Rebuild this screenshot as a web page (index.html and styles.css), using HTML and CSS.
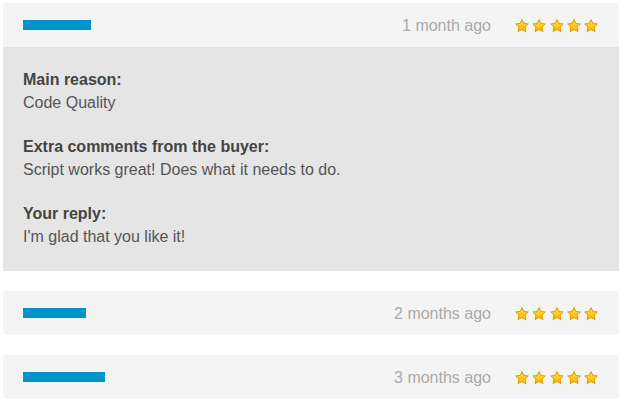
FILE: index.html
```html
<!DOCTYPE html>
<html>
<head>
<meta charset="utf-8">
<link rel="stylesheet" href="styles.css">
</head>
<body>
<svg width="0" height="0" class="defs">
  <defs>
    <linearGradient id="sg" x1="0" y1="0" x2="0" y2="1">
      <stop offset="0" stop-color="#ffdf3a"/>
      <stop offset="1" stop-color="#f9b800"/>
    </linearGradient>
    <symbol id="star" viewBox="0 0 14 14">
      <path d="M7 0.6 L8.9 4.5 L13.3 5 L10 8 L10.9 12.6 L7 10.4 L3.1 12.6 L4 8 L0.7 5 L5.1 4.5 Z" fill="url(#sg)" stroke="#dc9a00" stroke-width="1" stroke-linejoin="round"/>
    </symbol>
  </defs>
</svg>
<div class="list">
  <div class="review">
    <div class="head">
      <span class="name" style="width:68px"></span>
      <span class="when">1 month ago</span>
      <span class="stars">
        <svg class="star"><use href="#star"/></svg><svg class="star"><use href="#star"/></svg><svg class="star"><use href="#star"/></svg><svg class="star"><use href="#star"/></svg><svg class="star"><use href="#star"/></svg>
      </span>
    </div>
    <div class="body">
      <p><b>Main reason:</b><br>Code Quality</p>
      <p><b>Extra comments from the buyer:</b><br>Script works great! Does what it needs to do.</p>
      <p><b>Your reply:</b><br>I'm glad that you like it!</p>
    </div>
  </div>
  <div class="review">
    <div class="head solo">
      <span class="name" style="width:63px"></span>
      <span class="when">2 months ago</span>
      <span class="stars">
        <svg class="star"><use href="#star"/></svg><svg class="star"><use href="#star"/></svg><svg class="star"><use href="#star"/></svg><svg class="star"><use href="#star"/></svg><svg class="star"><use href="#star"/></svg>
      </span>
    </div>
  </div>
  <div class="review">
    <div class="head solo">
      <span class="name" style="width:82px"></span>
      <span class="when">3 months ago</span>
      <span class="stars">
        <svg class="star"><use href="#star"/></svg><svg class="star"><use href="#star"/></svg><svg class="star"><use href="#star"/></svg><svg class="star"><use href="#star"/></svg><svg class="star"><use href="#star"/></svg>
      </span>
    </div>
  </div>
</div>
</body>
</html>
```
FILE: styles.css
```css
html, body {
  margin: 0;
  padding: 0;
  background: #ffffff;
}
body {
  padding: 3px;
  font-family: "Liberation Sans", Arial, sans-serif;
  font-size: 16px;
  line-height: 23px;
  color: #555555;
}
.defs {
  position: absolute;
  width: 0;
  height: 0;
}
.list {
  display: flex;
  flex-direction: column;
  gap: 20px;
  width: 616px;
}
.head {
  display: flex;
  align-items: center;
  height: 44px;
  box-sizing: border-box;
  padding: 0 21px 0 20px;
  background: #f4f4f4;
  border-radius: 3px 3px 0 0;
}
.head.solo {
  border-radius: 3px;
}
.name {
  display: block;
  height: 10px;
  background: #0094cf;
  margin-top: -1px;
}
.when {
  margin-left: auto;
  color: #aaaaaa;
  margin-top: 1px;
}
.stars {
  display: flex;
  gap: 3.25px;
  margin-left: 24px;
  margin-top: 1px;
}
.star {
  width: 14px;
  height: 14px;
  display: block;
}
.body {
  background: #e5e5e5;
  padding: 21px 20px 23px;
}
.body p {
  margin: 0 0 21px;
}
.body p:last-child {
  margin-bottom: 0;
}
.body b {
  color: #444444;
}
```
